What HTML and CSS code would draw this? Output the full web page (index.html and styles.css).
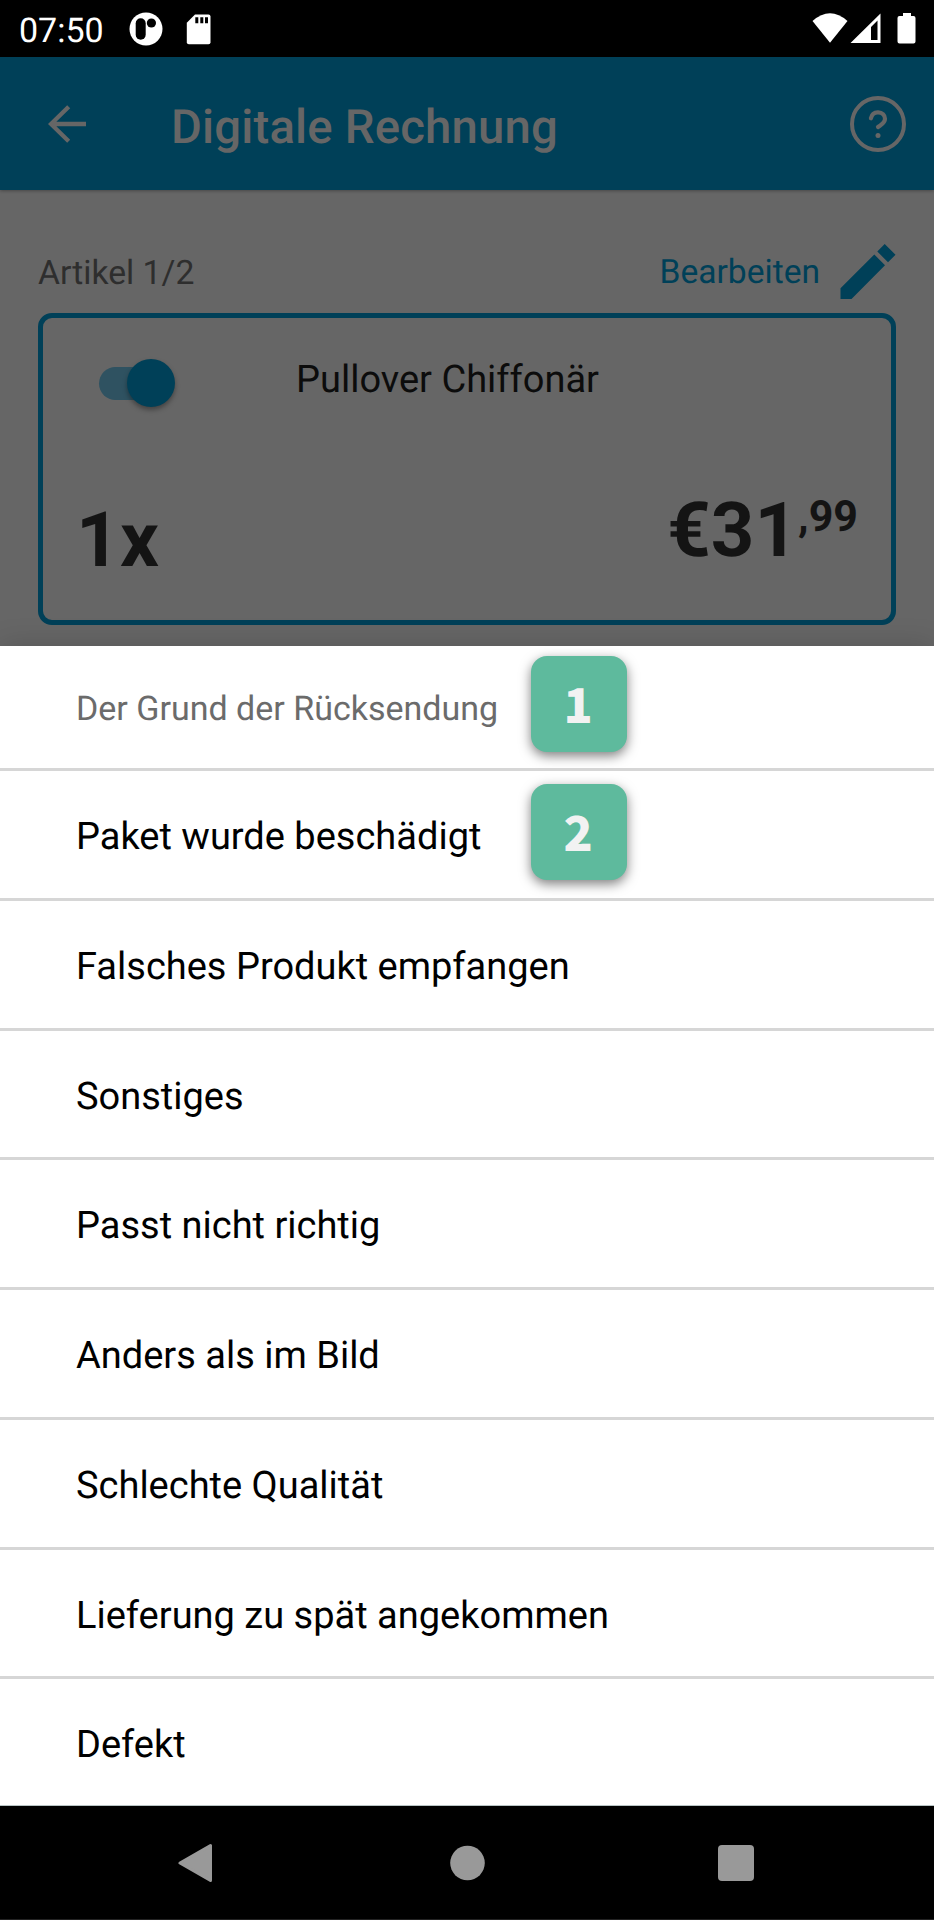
FILE: index.html
```html
<!DOCTYPE html>
<html lang="de">
<head>
<meta charset="utf-8">
<title>Digitale Rechnung</title>
<link rel="stylesheet" href="styles.css">
</head>
<body>
<div class="screen">
  <div class="status">
    <span class="clock">07:50</span>
    <svg class="st-app" width="34" height="34" viewBox="0 0 34 34"><circle cx="17" cy="17" r="16.5" fill="#fff"/><rect x="6.7" y="6.2" width="10" height="21.6" rx="5"/><circle cx="22.4" cy="11" r="4.6"/></svg>
    <svg class="st-sd" width="25" height="31" viewBox="0 0 25 31"><path d="M9 .5H22.500Q24.500.5 24.500 2.500V28.200Q24.500 30.200 22.500 30.200H2.800Q.8 30.200.8 28.200V8.700Z" fill="#fff"/><path d="M9.300 3.300h3v6h-3zM14.300 3.300h3v6h-3zM19 3.300h3v6h-3z"/></svg>
    <div class="st-right">
      <svg width="36" height="31" viewBox="0 0 36 31"><path d="M.5 8Q18-7.500 35.500 8L18 29.800Z" fill="#fff"/></svg>
      <svg class="st-cell" width="31" height="31" viewBox="0 0 31 31"><path fill="#fff" fill-rule="evenodd" d="M30.500.5V30H.5ZM21 14V27H27.500V7.500Z"/></svg>
      <svg class="st-bat" width="19" height="31" viewBox="0 0 19 31"><path fill="#fff" d="M6 0h8v3h2.500q2 0 2 2v23.500q0 2-2 2H2.500q-2 0-2-2V5q0-2 2-2H6Z"/></svg>
    </div>
  </div>
  <header class="appbar">
    <svg class="back" width="39" height="38" viewBox="0 0 39 38"><path d="M38 19H3M20.700 1.700L3 19L20.700 36.300" fill="none" stroke="#666" stroke-width="4.300"/></svg>
    <h1 class="title">Digitale Rechnung</h1>
    <svg class="help" width="56" height="56" viewBox="0 0 56 56" fill="none" stroke="#666" stroke-linecap="round" stroke-linejoin="round"><circle cx="28" cy="28" r="26" stroke-width="4"/><path d="M20.900 22.300C21.800 18.200 24.800 16.300 28.100 16.400C32.300 16.500 35 19.200 35 22.800C35 27.500 30.500 29 28 31" stroke-width="4.200"/><circle cx="28" cy="39.400" r="2.500" fill="#666" stroke="none"/></svg>
  </header>
  <main class="page">
    <div class="bar">
      <span class="count">Artikel 1/2</span>
      <span class="edit">Bearbeiten</span>
      <svg class="pencil" width="56" height="56" viewBox="0 0 56 56" fill="#004058"><path d="M.5 44.300L34.300 10.500L45 21.200L11.500 55H.5ZM37.300 7.500L44.700 0L55.500 10.700L48 18.200Z"/></svg>
    </div>
    <section class="card">
      <div class="row-top">
        <div class="toggle"><div class="track"></div><div class="thumb"></div></div>
        <span class="name">Pullover Chiffonär</span>
      </div>
      <div class="row-bottom">
        <span class="qty">1x</span>
        <span class="price">€31</span><span class="cents">,99</span>
      </div>
    </section>
  </main>
  <div class="sheet">
    <div class="item heading">Der Grund der Rücksendung<span class="badge">1</span></div>
    <div class="item">Paket wurde beschädigt<span class="badge">2</span></div>
    <div class="item">Falsches Produkt empfangen</div>
    <div class="item">Sonstiges</div>
    <div class="item">Passt nicht richtig</div>
    <div class="item">Anders als im Bild</div>
    <div class="item">Schlechte Qualität</div>
    <div class="item">Lieferung zu spät angekommen</div>
    <div class="item">Defekt</div>
  </div>
  <nav class="nav">
    <svg width="35" height="40" viewBox="0 0 35 40"><path d="M2 20L32.500 2.500V37.500Z" fill="#999" stroke="#999" stroke-width="3" stroke-linejoin="round"/></svg>
    <svg class="home" width="35" height="36" viewBox="0 0 35 36"><circle cx="17.500" cy="18" r="17.300" fill="#999"/></svg>
    <svg width="36" height="36" viewBox="0 0 36 36"><rect width="36" height="36" rx="4" fill="#999"/></svg>
  </nav>
</div>
</body>
</html>
```
FILE: styles.css
```css
* { box-sizing: border-box; }
body { margin: 0; font-family: Roboto, "Liberation Sans", sans-serif; background: #000; text-rendering: geometricPrecision; }
svg { display: block; flex: none; }
.screen { width: 934px; height: 1920px; display: flex; flex-direction: column; overflow: hidden; }

.status { height: 57px; flex: none; background: #000; color: #fff; display: flex; align-items: flex-start; padding: 0 18px 0 19px; }
.clock { width: 110px; font-size: 34px; line-height: 62px; white-space: nowrap; }
.st-app { margin-top: 12px; }
.st-sd { margin: 14px 0 0 23px; }
.st-right { margin: 13px 0 0 auto; display: flex; }
.st-cell { margin-left: 2px; }
.st-bat { margin-left: 16px; }

.appbar { height: 133px; flex: none; background: #004058; color: #666; display: flex; align-items: flex-start; padding: 0 28px 0 48px; position: relative; box-shadow: 0 1px 3px rgba(0,0,0,.3); }
.back { margin-top: 48px; }
.title { margin: 0 0 0 84px; font-size: 47.3px; line-height: 140px; font-weight: 500; letter-spacing: .17px; white-space: nowrap; }
.help { margin: 39px 0 0 auto; }

.page { height: 456px; flex: none; background: #666; padding: 53px 38px 0; }
.bar { height: 70px; display: flex; align-items: flex-start; }
.count { font-size: 33.7px; line-height: 62px; color: #2e2e2e; }
.edit { margin-left: auto; font-size: 33.6px; line-height: 60px; color: #004058; }
.pencil { margin: 1px 0 0 20px; }
.card { height: 312px; border: 5px solid #004058; border-radius: 14px; padding: 0 33px 0 33px; display: flex; flex-direction: column; }
.row-top { height: 120px; display: flex; }
.toggle { position: relative; width: 76px; height: 48px; margin: 41px 0 0 23px; }
.track { width: 70px; height: 33px; margin-top: 8px; border-radius: 17px; background: #2f5261; }
.thumb { position: absolute; right: 0; top: 0; width: 48px; height: 48px; border-radius: 50%; background: #004058; box-shadow: 0 3px 5px rgba(0,0,0,.35); }
.name { margin-left: 121px; font-size: 38px; line-height: 124px; color: #0c0c0c; white-space: nowrap; }
.row-bottom { display: flex; align-items: flex-start; color: #141414; font-weight: 700; }
.qty { font-size: 76.500px; line-height: 204px; }
.price { margin-left: auto; font-size: 76px; line-height: 184px; }
.cents { font-size: 43px; line-height: 158px; }

.sheet { height: 1160px; flex: none; background: #fff; position: relative; box-shadow: 0 0 28px rgba(0,0,0,.16); border-bottom: 1px solid #b8c4c4; }
.item { height: 129.75px; padding: 0 0 0 76px; border-bottom: 3px solid #d6d6d6; font-size: 38px; line-height: 133.5px; color: #000; display: flex; white-space: nowrap; position: relative; }
.item:last-child { border-bottom: 0; height: 126px; }
.heading { height: 125px; font-size: 34px; line-height: 127px; color: #6b6b6b; }
.badge { position: absolute; left: 531px; top: 10px; width: 96px; height: 96px; border-radius: 16px; background: #5eba9d; color: #f2f2f2; font: 900 48px/92px "Noto Sans CJK JP", sans-serif; text-align: center; padding-right: 2px; box-shadow: 0 4px 12px rgba(0,0,0,.5); }
.item:not(.heading) .badge { top: 13px; }

.nav { height: 114px; flex: none; background: #000; border-bottom: 1px solid #222; display: flex; align-items: center; justify-content: space-between; padding: 0 180px 0 178px; }
.home { margin-left: 3px; }
```
